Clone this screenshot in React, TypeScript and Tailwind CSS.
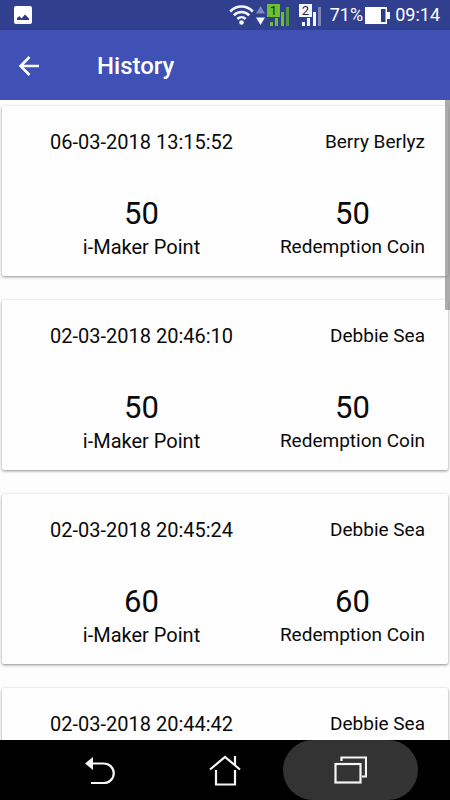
type Entry = {
  date: string;
  name: string;
  points: number;
  coins: number;
};

const entries: Entry[] = [
  { date: "06-03-2018 13:15:52", name: "Berry Berlyz", points: 50, coins: 50 },
  { date: "02-03-2018 20:46:10", name: "Debbie Sea", points: 50, coins: 50 },
  { date: "02-03-2018 20:45:24", name: "Debbie Sea", points: 60, coins: 60 },
  { date: "02-03-2018 20:44:42", name: "Debbie Sea", points: 60, coins: 60 },
];

function PictureIcon() {
  return (
    <svg width="18" height="18" viewBox="0 0 18 18" aria-hidden="true">
      <rect width="18" height="18" rx="2" fill="#fff" />
      <path d="M3 14V12L5.500 10 7.500 12.500 11 8.500 15 12.500V14Z" fill="#2e3b8c" />
    </svg>
  );
}

function WifiIcon() {
  return (
    <svg width="25" height="20" viewBox="0 0 25 20" fill="none" stroke="#f4f6ff" strokeWidth="2.600" aria-hidden="true">
      <path d="M1.200 6.500C7.500-.2 17.500-.2 23.800 6.500" />
      <path d="M4.800 10.300C9 5.900 16 5.900 20.200 10.300" />
      <path d="M8.400 14C10.800 11.600 14.200 11.600 16.600 14" />
      <circle cx="12.500" cy="17.500" r="2.300" fill="#f4f6ff" stroke="none" />
    </svg>
  );
}

function DataArrows() {
  return (
    <svg width="9" height="20" viewBox="0 0 9 20" aria-hidden="true">
      <path d="M0 8.500 4.500 1 9 8.500Z" fill="#8188bd" />
      <path d="M0 12.500H9L4.500 20Z" fill="#f4f6ff" />
    </svg>
  );
}

function SignalIcon({ sim, color, last }: { sim: string; color: string; last: string }) {
  return (
    <svg width="24" height="23" viewBox="0 0 24 23" aria-hidden="true">
      <rect width="13" height="13" fill={color} />
      <text x="6.500" y="11" textAnchor="middle" fontFamily="Roboto" fontSize="13" fill="#1c2358">
        {sim}
      </text>
      <g fill={color}>
        <rect x="3" y="18" width="3" height="4" />
        <rect x="8" y="14" width="3" height="8" />
        <rect x="14" y="8" width="3" height="14" />
        <rect x="19" y="3" width="3" height="19" fill={last} />
      </g>
    </svg>
  );
}

function BatteryIcon() {
  return (
    <svg width="25" height="19" viewBox="0 0 25 19" aria-hidden="true">
      <path d="M0 1H22V18H0Z" fill="#fff" />
      <path d="M22 6H25V13H22Z" fill="#fff" />
      <path d="M16 3H20.500V16H16Z" fill="#2e3b8c" />
    </svg>
  );
}

function StatusBar() {
  return (
    <div className="flex h-[30px] shrink-0 items-center justify-between bg-[#303f8e] pr-[10px] pl-[14px] text-white">
      <PictureIcon />
      <div className="flex items-center">
        <WifiIcon />
        <div className="ml-[2px] flex">
          <DataArrows />
        </div>
        <div className="ml-[2px] flex">
          <SignalIcon sim="1" color="#6cc02c" last="#4f9a3b" />
        </div>
        <div className="ml-2 flex">
          <SignalIcon sim="2" color="#f4f6ff" last="#7b83ba" />
        </div>
        <span className="ml-[7px] text-[18px] leading-6">71%</span>
        <div className="ml-[2px] flex">
          <BatteryIcon />
        </div>
        <span className="ml-[5px] text-[18px] leading-6">09:14</span>
      </div>
    </div>
  );
}

function Amount({ value, label }: { value: number; label: string }) {
  return (
    <div className="flex flex-col items-center">
      <span className="text-[31px] leading-9">{value}</span>
      <span className="mt-[3px] leading-6">{label}</span>
    </div>
  );
}

function HistoryCard({ entry }: { entry: Entry }) {
  return (
    <li className="flex shrink-0 justify-between rounded-[2px] bg-[#fefefe] pt-6 pr-[23px] pb-[17px] pl-12 shadow-[0_1px_3px_rgba(0,0,0,0.45)]">
      <div className="flex flex-col gap-[42px] text-[20px]">
        <span className="leading-6">{entry.date}</span>
        <Amount value={entry.points} label="i-Maker Point" />
      </div>
      <div className="flex flex-col gap-[42px] text-[19px]">
        <span className="text-right leading-6">{entry.name}</span>
        <Amount value={entry.coins} label="Redemption Coin" />
      </div>
    </li>
  );
}

export default function App() {
  return (
    <div className="flex h-screen flex-col overflow-hidden bg-[#fdfdfd] font-[Roboto,sans-serif] text-[#0a0a0a]">
      <StatusBar />
      <header className="flex h-[70px] shrink-0 items-center bg-[#3f51b5] pt-[2px] pl-[18px] text-white">
        <button type="button" aria-label="Back" className="flex">
          <svg width="22" height="22" viewBox="0 0 22 22" fill="none" stroke="#fff" strokeWidth="2.500" aria-hidden="true">
            <path d="M21 11H3M11.500 2 2.500 11 11.500 20" />
          </svg>
        </button>
        <h1 className="ml-[57px] text-[24px] leading-8 font-medium">History</h1>
      </header>

      <div className="relative min-h-0 flex-1">
        <main className="h-full overflow-y-auto [scrollbar-width:none]">
          <ul className="flex flex-col gap-6 px-[2px] pt-[6px] pb-6">
            {entries.map((entry) => (
              <HistoryCard key={entry.date} entry={entry} />
            ))}
          </ul>
        </main>
        <div className="absolute top-0 right-0 h-[210px] w-[5px] bg-[#7f7f7f]/65" />
      </div>

      <nav className="flex h-[60px] shrink-0 items-center justify-center bg-black">
        <button type="button" aria-label="Back" className="flex h-full w-[125px] items-center justify-center">
          <svg width="30" height="29" viewBox="0 0 30 29" fill="none" stroke="#f5f5f5" strokeWidth="2.200" aria-hidden="true">
            <path d="M7 7.500H19A9.500 9.500 0 0 1 19 27H6" />
            <path d="M0 7.500 8 1V14Z" fill="#f5f5f5" stroke="none" />
          </svg>
        </button>
        <button type="button" aria-label="Home" className="flex h-full w-[125px] items-center justify-center">
          <svg width="32" height="31" viewBox="0 0 32 31" fill="none" stroke="#f5f5f5" strokeWidth="2.200" aria-hidden="true">
            <path d="M1 14.500 16 2 31 14.500M26 10V1" />
            <path d="M7 15V29.500H26V15" />
          </svg>
        </button>
        <button
          type="button"
          aria-label="Recent apps"
          className="-mx-[5px] flex h-full w-[135px] items-center justify-center rounded-full bg-[#333333]"
        >
          <svg width="33" height="28" viewBox="0 0 33 28" fill="none" stroke="#f5f5f5" strokeWidth="2.200" aria-hidden="true">
            <path d="M7.500 5V1.500H32V20.500H28" />
            <rect x="1.500" y="8" width="25" height="18.500" />
          </svg>
        </button>
      </nav>
    </div>
  );
}
